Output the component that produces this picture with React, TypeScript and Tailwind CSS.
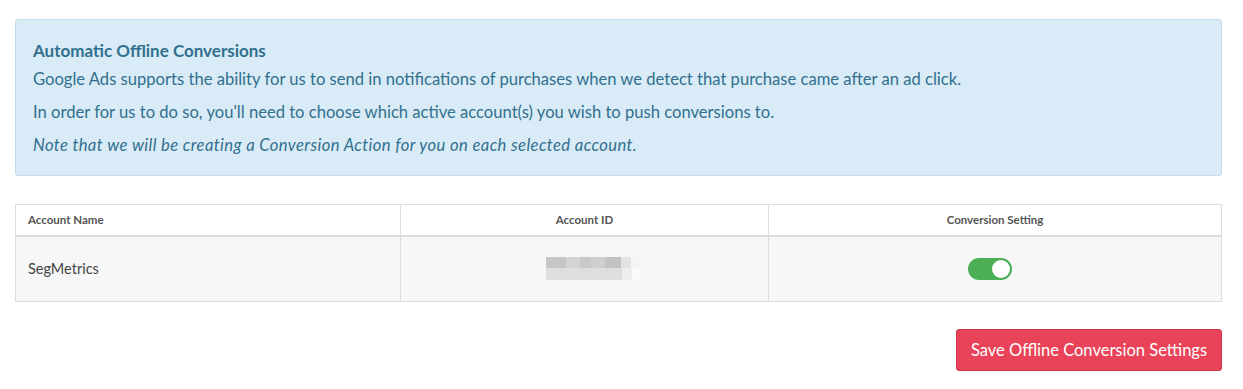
export default function App() {
  return (
    <div className="w-[1243px] h-[389px] bg-white pl-[15px] pr-[21px] pt-[19px] font-['Lato','Noto_Sans',sans-serif]">
      {/* Info alert */}
      <div className="h-[157px] rounded-[3px] border border-[#c4dce9] bg-[#d9ebf6] px-[17px] pt-[20px] text-[#31708f]">
        <h4 className="text-[17px] font-bold leading-[22px]">Automatic Offline Conversions</h4>
        <p className="mt-[6px] text-[16.6px] leading-[22px]">
          Google Ads supports the ability for us to send in notifications of purchases when we detect that purchase came after an ad click.
        </p>
        <p className="mt-[11px] text-[16.6px] leading-[22px]">
          In order for us to do so, you'll need to choose which active account(s) you wish to push conversions to.
        </p>
        <p className="mt-[11px] text-[16.6px] leading-[22px] italic tracking-[0.4px]">
          Note that we will be creating a Conversion Action for you on each selected account.
        </p>
      </div>

      {/* Accounts table */}
      <table className="mt-[28px] w-full border-collapse text-[#444]">
        <thead>
          <tr className="h-[31px] border-b-2 border-[#dddddd]">
            <th className="w-[385px] border border-[#dddddd] px-[12px] text-left text-[11.5px] font-bold text-[#555]">Account Name</th>
            <th className="w-[368px] border border-[#dddddd] text-center text-[11.5px] font-bold text-[#555]">Account ID</th>
            <th className="border border-[#dddddd] text-center text-[11.5px] font-bold text-[#555]">Conversion Setting</th>
          </tr>
        </thead>
        <tbody>
          <tr className="h-[66px] bg-[#f7f7f7]">
            <td className="border border-[#dddddd] px-[12px] text-[14.5px]">SegMetrics</td>
            <td className="border border-[#dddddd]">
              <div className="ml-[145px] flex w-[95px] flex-col">
                <div className="flex h-[11px]">
                  <div className="w-[20px] bg-[#c6c6c9]" />
                  <div className="w-[14px] bg-[#d4d4d6]" />
                  <div className="w-[11px] bg-[#c9c9cc]" />
                  <div className="w-[14px] bg-[#cfcfd1]" />
                  <div className="w-[16px] bg-[#c2c2c5]" />
                  <div className="w-[10px] bg-[#e4e4e6]" />
                  <div className="w-[10px] bg-[#f4f4f5]" />
                </div>
                <div className="flex h-[12px]">
                  <div className="w-[76px] bg-[#dedee0]" />
                  <div className="w-[10px] bg-[#ededee]" />
                  <div className="w-[9px] bg-[#fafafa]" />
                </div>
              </div>
            </td>
            <td className="border border-[#dddddd]">
              <div className="ml-[199px] flex h-[22px] w-[44px] items-center justify-end rounded-full bg-[#4cae55] p-[2px]">
                <div className="h-[18px] w-[18px] rounded-full bg-white" />
              </div>
            </td>
          </tr>
        </tbody>
      </table>

      {/* Save button */}
      <div className="mt-[27px] flex justify-end">
        <button className="h-[42px] w-[266px] rounded-[3px] border border-[#c9354a] bg-[#e84358] text-[16.5px] text-white">
          Save Offline Conversion Settings
        </button>
      </div>
    </div>
  )
}
